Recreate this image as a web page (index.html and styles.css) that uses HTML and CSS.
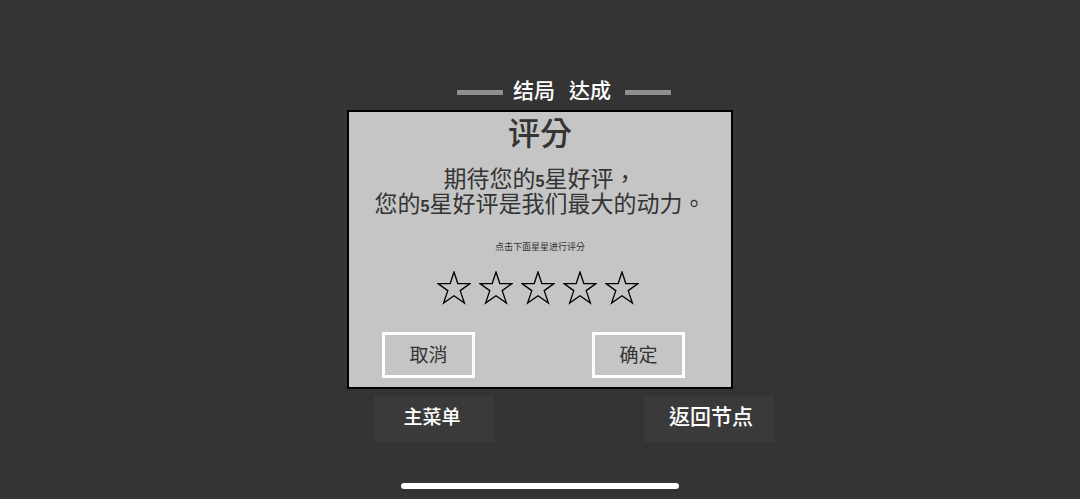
FILE: index.html
```html
<!DOCTYPE html>
<html lang="zh-Hant">
<head>
    <meta charset="UTF-8">
    <meta name="viewport" content="width=device-width, initial-scale=1.0">
    <title>评分</title>
    <link rel="stylesheet" href="styles.css">
</head>
<body>
    <svg width="0" height="0" class="defs" aria-hidden="true">
      <symbol id="star" viewBox="0 0 34 34">
        <path d="M17 1 L20.8 12.5 L33 12.6 L23.2 19.6 L27.4 32 L17 24.8 L6.6 32 L10.8 19.6 L1 12.6 L13.2 12.5 Z" />
      </symbol>
    </svg>
    <main class="container">
      <div class="ending">
        <span class="line"></span>
        <span class="ending-text"><span>结局</span><span>达成</span></span>
        <span class="line"></span>
      </div>
      <div class="dialog">
        <h1>评分</h1>
        <p class="message">期待您的<span class="num">5</span>星好评，<br>您的<span class="num">5</span>星好评是我们最大的动力。</p>
        <p class="hint">点击下面星星进行评分</p>
        <div class="stars">
          <button type="button" aria-label="1星"><svg><use href="#star" /></svg></button>
          <button type="button" aria-label="2星"><svg><use href="#star" /></svg></button>
          <button type="button" aria-label="3星"><svg><use href="#star" /></svg></button>
          <button type="button" aria-label="4星"><svg><use href="#star" /></svg></button>
          <button type="button" aria-label="5星"><svg><use href="#star" /></svg></button>
        </div>
        <div class="actions">
          <button type="button">取消</button>
          <button type="button">确定</button>
        </div>
      </div>
      <div class="menu">
        <button type="button" class="main-menu">主菜单</button>
        <button type="button" class="back">返回节点</button>
      </div>
      <div class="home-bar"></div>
    </main>
</body>
</html>
```
FILE: styles.css
```css
* {
  box-sizing: border-box;
}
body {
  margin: 0;
  background-color: #343434;
  color: #343434;
  font-family: "Noto Sans CJK TC", "Noto Sans CJK SC", sans-serif;
}
button {
  padding: 0;
  border: none;
  background: none;
  color: inherit;
  font-family: inherit;
  cursor: pointer;
}
.defs {
  position: absolute;
}
.container {
  display: flex;
  flex-direction: column;
  align-items: center;
  padding-top: 74px;
}
.ending {
  display: flex;
  align-items: center;
  gap: 10px;
  height: 36px;
  padding-left: 48px;
  color: white;
  font-size: 21px;
  font-weight: 500;
  line-height: 32px;
}
.ending-text {
  display: flex;
  gap: 14px;
  padding: 0 4px 6px 0;
}
.line {
  width: 46px;
  height: 5px;
  background-color: #8e8e8e;
}
.dialog {
  width: 386px;
  max-width: 100%;
  padding-bottom: 9px;
  border: 2px solid black;
  background-color: #c5c5c5;
  text-align: center;
}
h1 {
  margin: 0;
  font-size: 32px;
  font-weight: 500;
  line-height: 38px;
}
.message {
  margin: 15px 0 0;
  font-size: 23px;
  line-height: 24px;
}
.num {
  font-family: "Liberation Sans Narrow", "Liberation Sans", sans-serif;
  font-size: 16px;
  font-weight: bold;
  line-height: 1;
}
.hint {
  margin: 24px 0 0;
  font-size: 9px;
  line-height: 16px;
}
.stars {
  display: flex;
  justify-content: center;
  margin-top: 16px;
  padding-right: 5px;
}
.stars button {
  width: 42px;
  height: 34px;
}
.stars svg {
  display: block;
  width: 34px;
  height: 34px;
  margin: 0 auto;
  fill: none;
  stroke: black;
  stroke-width: 1.3;
}
.actions {
  display: flex;
  justify-content: space-between;
  margin-top: 27px;
  padding: 0 46px 0 33px;
}
.actions button {
  width: 93px;
  height: 46px;
  padding-bottom: 4px;
  border: 3px solid white;
  font-size: 19px;
}
.menu {
  display: flex;
  justify-content: space-between;
  width: 468px;
  max-width: 100%;
  margin-top: 7px;
  padding-left: 68px;
}
.menu button {
  height: 46px;
  padding-bottom: 8px;
  background-color: #3a3a3a;
  color: white;
  font-weight: 500;
}
.menu .main-menu {
  width: 120px;
  padding-right: 4px;
  font-size: 19px;
}
.menu .back {
  width: 130px;
  padding-left: 4px;
  font-size: 21px;
}
.home-bar {
  width: 278px;
  height: 6px;
  margin-top: 41px;
  border-radius: 3px;
  background-color: white;
}
```
